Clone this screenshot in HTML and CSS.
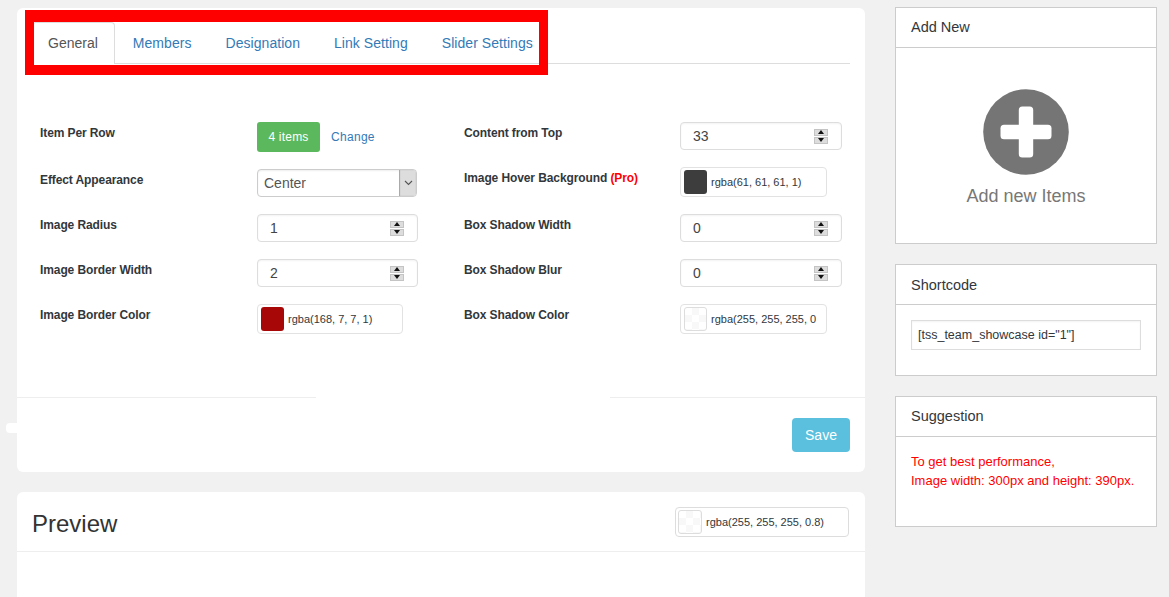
FILE: index.html
```html
<!DOCTYPE html>
<html lang="en">
<head>
<meta charset="utf-8">
<title>Team Showcase Settings</title>
<link rel="stylesheet" href="styles.css">
</head>
<body>
<div class="page">
  <main class="main">
    <section class="card settings">
      <nav class="tabs">
        <a class="tab active">General</a>
        <a class="tab">Members</a>
        <a class="tab">Designation</a>
        <a class="tab">Link Setting</a>
        <a class="tab">Slider Settings</a>
      </nav>
      <div class="form">
        <div class="col col-left">
          <div class="row"><label class="lbl">Item Per Row</label>
            <div class="items"><span class="btn-items">4 items</span><a class="change">Change</a></div></div>
          <div class="row"><label class="lbl">Effect Appearance</label>
            <div class="select"><span class="select-val">Center</span><span class="select-btn"><svg width="9" height="6" viewBox="0 0 9 6"><path d="M1 1l3.5 3.5L8 1" fill="none" stroke="#555" stroke-width="1.1"/></svg></span></div></div>
          <div class="row"><label class="lbl">Image Radius</label>
            <div class="num"><span class="num-val">1</span><span class="spin"><i class="up"></i><i class="down"></i></span></div></div>
          <div class="row"><label class="lbl">Image Border Width</label>
            <div class="num"><span class="num-val">2</span><span class="spin"><i class="up"></i><i class="down"></i></span></div></div>
          <div class="row"><label class="lbl">Image Border Color</label>
            <div class="color color-left"><span class="swatch red"></span><span class="color-val">rgba(168, 7, 7, 1)</span></div></div>
        </div>
        <div class="col col-right">
          <div class="row"><label class="lbl">Content from Top</label>
            <div class="num"><span class="num-val">33</span><span class="spin"><i class="up"></i><i class="down"></i></span></div></div>
          <div class="row"><label class="lbl">Image Hover Background <b class="pro">(Pro)</b></label>
            <div class="color"><span class="swatch dark"></span><span class="color-val">rgba(61, 61, 61, 1)</span></div></div>
          <div class="row"><label class="lbl">Box Shadow Width</label>
            <div class="num"><span class="num-val">0</span><span class="spin"><i class="up"></i><i class="down"></i></span></div></div>
          <div class="row"><label class="lbl">Box Shadow Blur</label>
            <div class="num"><span class="num-val">0</span><span class="spin"><i class="up"></i><i class="down"></i></span></div></div>
          <div class="row"><label class="lbl">Box Shadow Color</label>
            <div class="color"><span class="swatch check"></span><span class="color-val">rgba(255, 255, 255, 0</span></div></div>
        </div>
      </div>
      <div class="rule"></div>
      <div class="foot"><span class="btn-save">Save</span></div>
      <span class="smudge"></span>
      <div class="marker"></div>
    </section>
    <section class="card preview">
      <header class="preview-head">
        <h2 class="preview-title">Preview</h2>
        <div class="color color-preview"><span class="swatch check"></span><span class="color-val">rgba(255, 255, 255, 0.8)</span></div>
      </header>
    </section>
  </main>
  <aside class="side">
    <section class="panel">
      <h3 class="panel-head">Add New</h3>
      <div class="add-body">
        <svg class="add-icon" width="86" height="86" viewBox="0 0 86 86"><circle cx="43" cy="43" r="42.8" fill="#757575"/><rect x="17.5" y="35.8" width="51" height="14.4" rx="3.5" fill="#fff"/><rect x="35.8" y="17.5" width="14.4" height="51" rx="3.5" fill="#fff"/></svg>
        <div class="add-text">Add new Items</div>
      </div>
    </section>
    <section class="panel">
      <h3 class="panel-head panel-head-low">Shortcode</h3>
      <div class="short-body"><div class="short-input">[tss_team_showcase id="1"]</div></div>
    </section>
    <section class="panel">
      <h3 class="panel-head">Suggestion</h3>
      <div class="sugg-body">To get best performance,<br>Image width: 300px and height: 390px.</div>
    </section>
  </aside>
</div>
</body>
</html>
```

FILE: styles.css
```css
* { box-sizing: border-box; }
html, body { margin: 0; height: 597px; overflow: hidden; }
body { background: #f1f1f1; font-family: "Liberation Sans", Arial, sans-serif; font-size: 14px; color: #333; }
.page { display: flex; align-items: flex-start; padding-left: 17px; gap: 30px; }
.main { width: 848px; margin-top: 8px; display: flex; flex-direction: column; gap: 20px; }
.side { width: 262px; margin-top: 7px; display: flex; flex-direction: column; gap: 20px; }
.card { background: #fff; border-radius: 6px; }
.settings { position: relative; height: 464px; padding-top: 14px; }

.tabs { display: flex; margin: 0 15px; border-bottom: 1px solid #ddd; height: 42px; }
.tab { height: 42px; padding: 10px 15px; margin-right: 2px; line-height: 20px; letter-spacing: 0.05px; color: #337ab7; border: 1px solid transparent; border-bottom: 0; white-space: nowrap; }
.tab.active { padding-right: 16px; letter-spacing: 0; color: #555; background: #fff; border-color: #ddd; border-radius: 4px 4px 0 0; }

.form { display: flex; margin: 58px 0 0 23px; height: 212px; }
.col { display: flex; flex-direction: column; gap: 17px; }
.col-left { width: 424px; }
.row { display: flex; align-items: flex-start; }
.lbl { padding-top: 1px; line-height: 20px; font-size: 12px; font-weight: 700; letter-spacing: -0.1px; color: #32373c; }
.col-left .lbl { width: 217px; }
.col-right .lbl { width: 216px; }
.pro { color: #f00; }

.items { display: flex; align-items: center; height: 30px; }
.btn-items { width: 63px; height: 30px; background: #5cb85c; border-radius: 3px; color: #fff; font-size: 12px; letter-spacing: 0.2px; line-height: 30px; text-align: center; }
.change { margin-left: 11px; font-size: 12px; letter-spacing: 0.3px; color: #337ab7; }

.select { display: flex; width: 160px; height: 28px; border: 1px solid #ccc; border-radius: 4px; box-shadow: inset 0 1px 2px rgba(0,0,0,.07); overflow: hidden; }
.select-val { flex: 1; padding-left: 6px; line-height: 26px; color: #555; }
.select-btn { width: 17px; display: flex; align-items: center; justify-content: center; background: #ddd; border-left: 1px solid #aaa; box-shadow: inset 0 0 1px #999; }

.num { display: flex; align-items: center; width: 161px; height: 28px; padding-left: 12px; padding-right: 13px; border: 1px solid #ddd; border-radius: 4px; box-shadow: inset 0 1px 2px rgba(0,0,0,.05); }
.col-right .num { width: 162px; }
.num-val { flex: 1; color: #444; }
.spin { display: flex; flex-direction: column; gap: 1px; width: 14px; height: 15px; }
.spin i { position: relative; flex: 1; display: flex; align-items: center; justify-content: center; background: #ddd; border: 1px solid #c4c4c4; }
.spin i::after { content: ""; border-left: 3.5px solid transparent; border-right: 3.5px solid transparent; }
.spin .up::after { border-bottom: 4px solid #111; }
.spin .down::after { border-top: 4px solid #111; }

.color { display: flex; align-items: center; width: 147px; height: 30px; padding-left: 3px; border: 1px solid #e2e2e2; border-radius: 4px; overflow: hidden; }
.color-left { width: 146px; }
.swatch { flex: none; width: 23px; height: 24px; border-radius: 3px; }
.swatch.red { background: #a80707; }
.swatch.dark { background: #3d3d3d; }
.swatch.check { border: 1px solid #ddd; background: repeating-conic-gradient(#f8f8f8 0 25%, #fff 0 50%) 0 0 / 14px 14px; }
.color-val { margin-left: 4px; font-size: 11px; color: #32373c; white-space: nowrap; }

.rule { height: 1px; background: linear-gradient(90deg, #eee 299px, transparent 299px, transparent 593px, #eee 593px); margin-top: 63px; }
.foot { display: flex; justify-content: flex-end; padding: 20px 15px 0; }
.btn-save { width: 58px; height: 34px; background: #5bc0de; border-radius: 4px; color: #fff; line-height: 34px; text-align: center; }
.smudge { position: absolute; left: -11px; top: 415px; width: 14px; height: 10px; background: #fff; border-radius: 4px 0 0 4px; }
.marker { position: absolute; left: 8px; top: 2px; width: 523px; height: 65px; border: solid #f00; border-width: 12px 9px 10px; pointer-events: none; }

.preview { height: 105px; border-radius: 6px 6px 0 0; }
.preview-head { display: flex; align-items: center; justify-content: space-between; height: 60px; padding: 0 16px 0 15px; border-bottom: 1px solid #eee; }
.preview-title { margin: 4px 0 0; font-size: 24px; font-weight: 400; color: #333; }
.color-preview { width: 174px; margin-top: 1px; padding-left: 2px; border-color: #ddd; }
.color-preview .swatch { width: 24px; }

.panel { background: #fff; border: 1px solid #ccc; }
.panel-head { margin: 0; height: 40px; padding-left: 15px; font-size: 14.5px; font-weight: 400; line-height: 38px; color: #32373c; border-bottom: 1px solid #ccc; }
.panel-head-low { line-height: 40px; }
.add-body { display: flex; flex-direction: column; align-items: center; height: 195px; padding-top: 41px; }
.add-text { margin-top: 11px; font-size: 18px; line-height: 20px; color: #777; }
.short-body { height: 70px; padding: 15px 15px 0; }
.short-input { width: 230px; height: 30px; padding-left: 6px; border: 1px solid #ddd; box-shadow: inset 0 1px 2px rgba(0,0,0,.05); font-size: 12.5px; line-height: 28px; color: #32373c; white-space: nowrap; }
.sugg-body { height: 89px; padding: 15px 15px 0; font-size: 13px; line-height: 19px; color: #f00; }
```
